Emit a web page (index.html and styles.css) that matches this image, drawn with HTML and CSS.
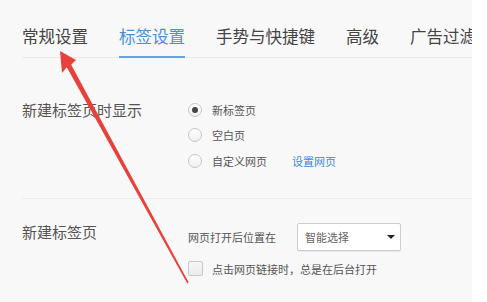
FILE: index.html
```html
<!DOCTYPE html>
<html lang="zh-CN">
<head>
    <meta charset="UTF-8">
    <title>标签设置</title>
    <link rel="stylesheet" href="styles.css">
</head>
<body>
    <div class="settings">
        <div class="tabs">
            <span class="tab">常规设置</span>
            <span class="tab active">标签设置</span>
            <span class="tab">手势与快捷键</span>
            <span class="tab">高级</span>
            <span class="tab">广告过滤</span>
        </div>

        <div class="section first">
            <div class="section-title">新建标签页时显示</div>
            <div class="options">
                <div class="option">
                    <span class="radio checked"></span>
                    <span>新标签页</span>
                </div>
                <div class="option">
                    <span class="radio"></span>
                    <span>空白页</span>
                </div>
                <div class="option">
                    <span class="radio"></span>
                    <span>自定义网页</span>
                    <a class="link">设置网页</a>
                </div>
            </div>
        </div>

        <div class="section second">
            <div class="section-title tall">新建标签页</div>
            <div class="options">
                <div class="option select-row">
                    <span>网页打开后位置在</span>
                    <div class="select">
                        <span>智能选择</span>
                        <span class="caret"></span>
                    </div>
                </div>
                <div class="option check-row">
                    <span class="checkbox"></span>
                    <span>点击网页链接时，总是在后台打开</span>
                </div>
            </div>
        </div>

        <!-- annotation arrow -->
        <svg class="arrow" width="487" height="302" viewBox="0 0 487 302">
            <polygon fill="#e8413c" points="60,51 76,60 71.2,64.8 188.7,282.6 187.3,283.4 66.8,67.2 62,73"/>
        </svg>
    </div>
</body>
</html>
```

FILE: styles.css
```css
body {
    margin: 0;
    background: #ffffff;
    font-family: "Noto Sans CJK SC", "Noto Sans", sans-serif;
}

.settings {
    width: 472px;
    height: 302px;
    background: #f8f8f8;
    overflow: hidden;
    position: relative;
}

.tabs {
    display: flex;
    gap: 31px;
    margin-left: 22px;
    padding-top: 24px;
    border-bottom: 1px solid #e9e9e9;
    white-space: nowrap;
}

.tab {
    font-size: 16.5px;
    line-height: 24px;
    color: #444;
    padding-bottom: 8px;
    border-bottom: 2px solid transparent;
    margin-bottom: -1px;
}

.tab.active {
    color: #4a8fd8;
    border-bottom-color: #6aa3dc;
}

.section {
    display: flex;
    margin-left: 22px;
}

.section.first {
    padding-top: 39px;
    padding-bottom: 24px;
    border-bottom: 1px solid #ececec;
}

.section.second {
    padding-top: 24px;
}

.section-title {
    width: 166px;
    font-size: 15px;
    line-height: 25px;
    color: #555;
}

.section-title.tall {
    line-height: 24px;
    margin-top: -3px;
}

.options {
    display: flex;
    flex-direction: column;
}

.option {
    display: flex;
    align-items: center;
    height: 25.5px;
    font-size: 11px;
    color: #555;
}

.radio {
    width: 12px;
    height: 12px;
    border: 1px solid #c6c6c6;
    border-radius: 50%;
    background: linear-gradient(#ffffff, #f0f0f0);
    margin-right: 10px;
    display: flex;
    align-items: center;
    justify-content: center;
}

.radio.checked::after {
    content: "";
    width: 6px;
    height: 6px;
    border-radius: 50%;
    background: #444;
}

.link {
    color: #3b8be0;
    margin-left: 25px;
}

.select-row {
    height: 28px;
}

.select {
    width: 95px;
    height: 26px;
    margin-left: 21px;
    padding: 0 0 0 7px;
    background: #fff;
    border: 1px solid #cdcdcd;
    border-radius: 2px;
    box-shadow: 0 1px 1px rgba(0, 0, 0, 0.06);
    display: flex;
    align-items: center;
    justify-content: space-between;
    color: #666;
}

.caret {
    width: 0;
    height: 0;
    border-left: 4px solid transparent;
    border-right: 4px solid transparent;
    border-top: 4px solid #222;
    margin-right: 5px;
}

.check-row {
    margin-top: 6px;
    height: 24px;
}

.checkbox {
    width: 13px;
    height: 13px;
    border: 1px solid #c8c8c8;
    border-radius: 2px;
    background: linear-gradient(#f6f6f6, #ececec);
    margin-right: 9px;
}

.arrow {
    position: absolute;
    top: 0;
    left: 0;
}
```
